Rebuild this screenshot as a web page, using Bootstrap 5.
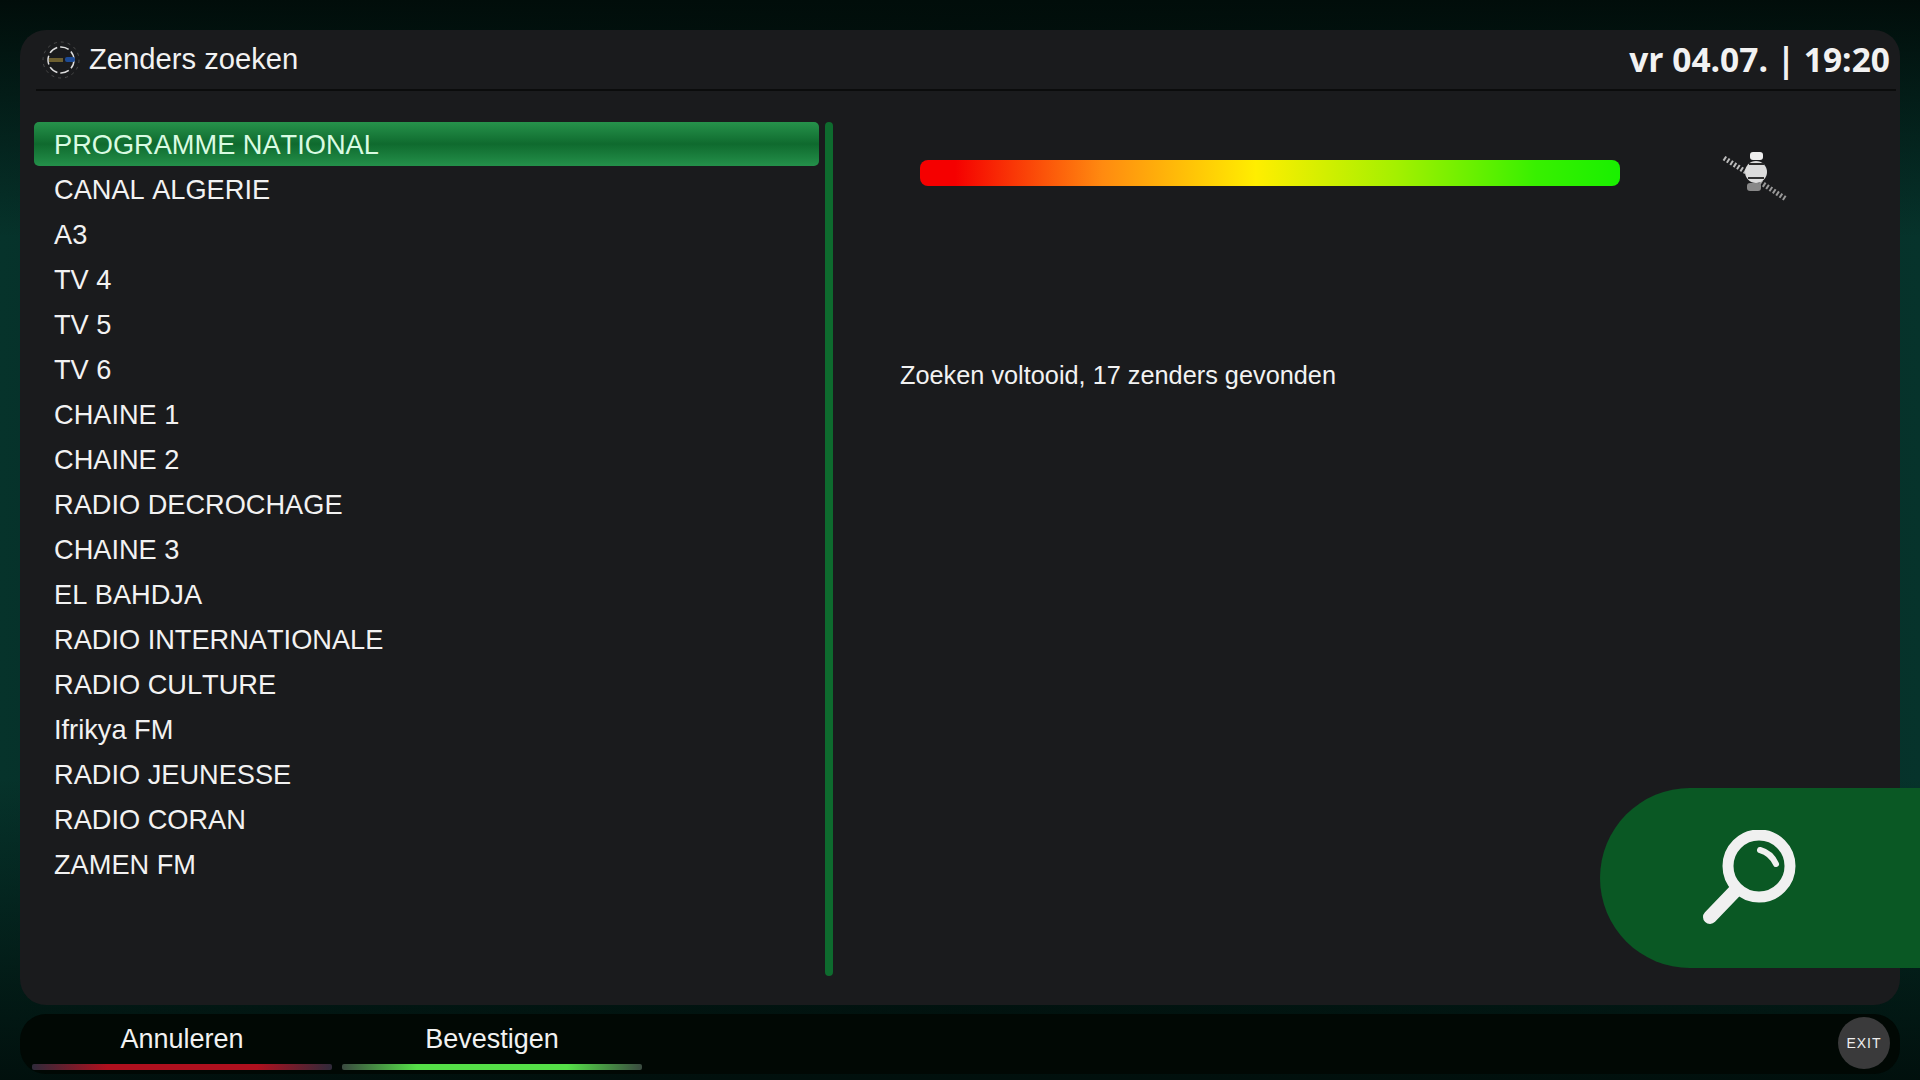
<!DOCTYPE html>
<html lang="nl">
<head>
  <meta charset="UTF-8">
  <meta name="viewport" content="width=device-width, initial-scale=1.0">
  <title>Zenders zoeken</title>
  <link href="https://cdn.jsdelivr.net/npm/bootstrap@5.3.0/dist/css/bootstrap.min.css" rel="stylesheet">
  <style>
    html, body { height: 100%; }
    body {
      width: 1920px; height: 1080px; overflow: hidden;
      padding: 30px 20px 6px;
      font-family: "Liberation Sans", Arial, sans-serif;
      font-kerning: none;
      color: #f2f2f2;
      background:
        linear-gradient(180deg, #010d0a 0, rgba(1,13,10,0) 22%, rgba(1,13,10,0) 72%, #01100d 100%),
        linear-gradient(90deg, #06332b 0, #021a15 50%, #06332b 100%);
    }
    .tv-panel { height: 975px; background: #1a1b1d; border-radius: 26px; position: relative; }
    .tv-head { height: 61px; margin: 0 4px 0 16px; border-bottom: 2px solid #0b0c0c; }
    .tv-logo { margin-left: 6px; }
    .tv-title { font-size: 29.2px; margin-left: 9px; line-height: 1; }
    .tv-clock { font-family: "Open Sans", sans-serif; font-weight: 700; font-size: 33.5px; line-height: 1; margin-right: 6px; font-kerning: normal; }
    .tv-body { padding: 31px 0 0 14px; }
    .tv-list { width: 785px; margin: 0; padding: 0; list-style: none; }
    .tv-list li { height: 45px; line-height: 45px; padding-left: 20px; font-size: 27.2px; white-space: nowrap; }
    .tv-list li.active-row {
      height: 44px; margin-bottom: 1px; border-radius: 5px; color: #d9fbe2;
      background: linear-gradient(180deg, #26924b 0, #0f6a2e 50%, #24904a 100%);
    }
    .tv-scroll { width: 8px; height: 854px; margin-left: 6px; border-radius: 4px; background: #0e6b2e; }
    .tv-side { margin-left: 67px; }
    .tv-signal {
      width: 700px; height: 26px; margin: 38px 0 0 20px; border-radius: 8px;
      background: linear-gradient(90deg, #f50000 0, #f50000 5%, #ff8a10 26%, #ffee00 48%, #a4f000 68%, #38f000 88%, #19f000 100%);
    }
    .tv-sat { margin: 28px 0 0 102px; }
    .tv-status { font-size: 25.3px; line-height: 1; margin-top: 161px; }
    .tv-search {
      position: absolute; right: -20px; top: 758px; width: 320px; height: 180px;
      background: #0a5824; border-radius: 90px 0 0 90px;
    }
    .tv-search svg { position: absolute; left: 98px; top: 42px; }
    .tv-foot { height: 60px; margin-top: 9px; background: #010804; border-radius: 26px; padding-left: 12px; position: relative; }
    .tv-key { width: 300px; margin-right: 10px; text-align: center; }
    .tv-key span { display: block; font-size: 27px; line-height: 1; padding-top: 12px; height: 50px; }
    .tv-key i { display: block; height: 6px; border-radius: 2px; }
    .key-red { background: linear-gradient(90deg, #2f2a3a 0, #b0101e 25%, #b0101e 75%, #2f2a3a 100%); }
    .key-green { background: linear-gradient(90deg, #3a4a40 0, #55e048 25%, #55e048 75%, #3a4a40 100%); }
    .tv-exit {
      position: absolute; right: 10px; top: 3px; width: 52px; height: 52px; border-radius: 50%;
      background: #3a3a3b; font-size: 14px; letter-spacing: 1px; color: #eee;
    }
  </style>
</head>
<body>
  <div class="tv-panel">
    <div class="tv-head d-flex align-items-center justify-content-between">
      <div class="d-flex align-items-center">
        <svg class="tv-logo" width="38" height="38" viewBox="0 0 38 38">
          <circle cx="19" cy="19" r="18" fill="none" stroke="#4a4a4a" stroke-width="1" stroke-dasharray="3 4"/>
          <circle cx="19" cy="19" r="13" fill="none" stroke="#ddd" stroke-width="1.5" stroke-dasharray="9 3"/>
          <rect x="7" y="17" width="14" height="4" fill="#6e6030"/>
          <rect x="23" y="16" width="10" height="5" rx="2" fill="#1d4a94"/>
        </svg>
        <span class="tv-title">Zenders zoeken</span>
      </div>
      <span class="tv-clock">vr 04.07. | 19:20</span>
    </div>
    <div class="tv-body d-flex">
      <ul class="tv-list">
        <li class="active-row">PROGRAMME NATIONAL</li>
        <li>CANAL ALGERIE</li>
        <li>A3</li>
        <li>TV 4</li>
        <li>TV 5</li>
        <li>TV 6</li>
        <li>CHAINE 1</li>
        <li>CHAINE 2</li>
        <li>RADIO DECROCHAGE</li>
        <li>CHAINE 3</li>
        <li>EL BAHDJA</li>
        <li>RADIO INTERNATIONALE</li>
        <li>RADIO CULTURE</li>
        <li>Ifrikya FM</li>
        <li>RADIO JEUNESSE</li>
        <li>RADIO CORAN</li>
        <li>ZAMEN FM</li>
      </ul>
      <div class="tv-scroll"></div>
      <div class="tv-side">
        <div class="d-flex">
          <div class="tv-signal"></div>
          <svg class="tv-sat" width="66" height="52" viewBox="0 0 66 52">
            <path d="M2 8 L24 22" stroke="#bbb" stroke-width="5" stroke-dasharray="2 2" fill="none"/>
            <path d="M38 32 L64 49" stroke="#999" stroke-width="5" stroke-dasharray="2 2" fill="none"/>
            <ellipse cx="34" cy="22" rx="11" ry="11" fill="#dcdcdc"/>
            <rect x="28" y="2" width="13" height="8" rx="3" fill="#eee"/>
            <rect x="27" y="13" width="15" height="2" fill="#2a2a2a"/>
            <rect x="26" y="27" width="16" height="2" fill="#333"/>
            <rect x="25" y="33" width="14" height="8" rx="3" fill="#888"/>
          </svg>
        </div>
        <div class="tv-status">Zoeken voltooid, 17 zenders gevonden</div>
      </div>
    </div>
    <div class="tv-search">
      <svg width="100" height="100" viewBox="0 0 100 100">
        <circle cx="61" cy="36" r="31" fill="none" stroke="#f0f0f0" stroke-width="11"/>
        <path d="M36 62 L12 87" stroke="#f0f0f0" stroke-width="14" stroke-linecap="round"/>
        <path d="M62 20 Q73 23 78 34" fill="none" stroke="#f0f0f0" stroke-width="6" stroke-linecap="round"/>
      </svg>
    </div>
  </div>
  <div class="tv-foot d-flex">
    <div class="tv-key"><span>Annuleren</span><i class="key-red"></i></div>
    <div class="tv-key"><span>Bevestigen</span><i class="key-green"></i></div>
    <div class="tv-exit d-flex align-items-center justify-content-center">EXIT</div>
  </div>
  <script src="https://cdn.jsdelivr.net/npm/bootstrap@5.3.0/dist/js/bootstrap.bundle.min.js"></script>
</body>
</html>
